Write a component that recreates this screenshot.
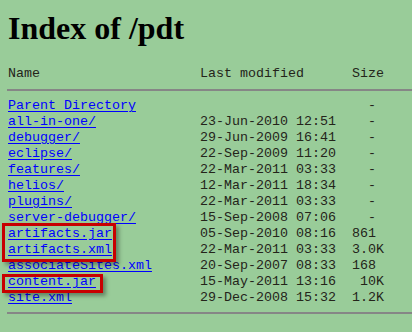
const rows = [
  { name: 'all-in-one/', date: '23-Jun-2010 12:51', size: '  -' },
  { name: 'debugger/', date: '29-Jun-2009 16:41', size: '  -' },
  { name: 'eclipse/', date: '22-Sep-2009 11:20', size: '  -' },
  { name: 'features/', date: '22-Mar-2011 03:33', size: '  -' },
  { name: 'helios/', date: '12-Mar-2011 18:34', size: '  -' },
  { name: 'plugins/', date: '22-Mar-2011 03:33', size: '  -' },
  { name: 'server-debugger/', date: '15-Sep-2008 07:06', size: '  -' },
  { name: 'artifacts.jar', date: '05-Sep-2010 08:16', size: '861' },
  { name: 'artifacts.xml', date: '22-Mar-2011 03:33', size: '3.0K' },
  { name: 'associateSites.xml', date: '20-Sep-2007 08:33', size: '168' },
  { name: 'content.jar', date: '15-May-2011 13:16', size: ' 10K' },
  { name: 'site.xml', date: '29-Dec-2008 15:32', size: '1.2K' },
]

const Hr = () => <div className="h-[2px] bg-[#868686] mr-[-8px] ml-[-1px]" />

export default function App() {
  return (
    <div className="min-h-[332px] w-[412px] overflow-hidden bg-[#99cc99] px-[8px] pt-[10px] text-[#24241a]">
      <h1 className="text-[32px] leading-[37px] font-bold text-black font-['Liberation_Serif',serif]">
        Index of /pdt
      </h1>
      <pre className="mt-[19px] text-[13.33px] leading-[16px] font-['Liberation_Mono',monospace]">
        <div>{'Name'.padEnd(24) + 'Last modified'.padEnd(19) + 'Size'}</div>
        <div className="mt-[7px] mb-[7px]">
          <Hr />
        </div>
        <div className="relative">
          <div>
            <a href="#" className="text-[#0000ff] underline underline-offset-2">Parent Directory</a>
            {''.padEnd(8) + ''.padEnd(19) + '  -'}
          </div>
          {rows.map((r) => (
            <div key={r.name}>
              <a href="#" className="text-[#0000ff] underline underline-offset-2">{r.name}</a>
              {''.padEnd(24 - r.name.length) + r.date + '  ' + r.size}
            </div>
          ))}
          <div className="absolute left-[-6px] top-[125px] w-[114px] h-[39px] border-[3px] border-[#c80000] shadow-[3px_3px_4px_rgba(0,0,0,0.35)]" />
          <div className="absolute left-[-6px] top-[176px] w-[101px] h-[19px] border-[3px] border-[#c80000] shadow-[3px_3px_4px_rgba(0,0,0,0.35)]" />
        </div>
        <div className="mt-[6px]">
          <Hr />
        </div>
      </pre>
    </div>
  )
}
